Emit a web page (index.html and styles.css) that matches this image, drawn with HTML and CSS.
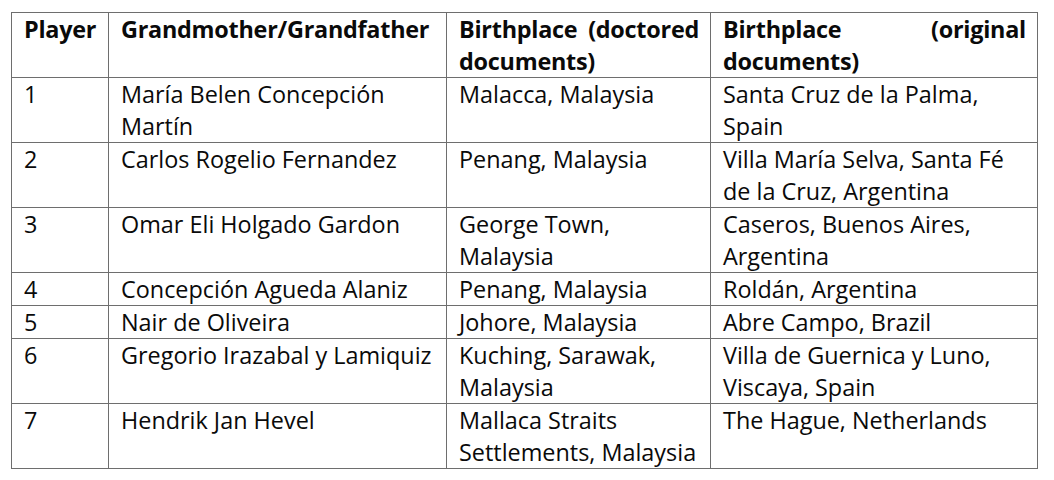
FILE: index.html
```html
<!DOCTYPE html>
<html>
<head>
<meta charset="utf-8">
<link rel="stylesheet" href="styles.css">
</head>
<body>
<table class="players">
  <colgroup>
    <col class="c1"><col class="c2"><col class="c3"><col class="c4">
  </colgroup>
  <thead>
    <tr>
      <th>Player</th>
      <th>Grandmother/Grandfather</th>
      <th>Birthplace (doctored documents)</th>
      <th>Birthplace (original documents)</th>
    </tr>
  </thead>
  <tbody>
    <tr><td>1</td><td>María Belen Concepción Martín</td><td>Malacca, Malaysia</td><td>Santa Cruz de la Palma, Spain</td></tr>
    <tr><td>2</td><td>Carlos Rogelio Fernandez</td><td>Penang, Malaysia</td><td>Villa María Selva, Santa Fé de la Cruz, Argentina</td></tr>
    <tr><td>3</td><td>Omar Eli Holgado Gardon</td><td>George Town, Malaysia</td><td>Caseros, Buenos Aires, Argentina</td></tr>
    <tr><td>4</td><td>Concepción Agueda Alaniz</td><td>Penang, Malaysia</td><td>Roldán, Argentina</td></tr>
    <tr><td>5</td><td>Nair de Oliveira</td><td>Johore, Malaysia</td><td>Abre Campo, Brazil</td></tr>
    <tr><td>6</td><td>Gregorio Irazabal y Lamiquiz</td><td>Kuching, Sarawak, Malaysia</td><td>Villa de Guernica y Luno, Viscaya, Spain</td></tr>
    <tr><td>7</td><td>Hendrik Jan Hevel</td><td>Mallaca Straits Settlements, Malaysia</td><td>The Hague, Netherlands</td></tr>
  </tbody>
</table>
</body>
</html>
```
FILE: styles.css
```css
html, body {
  margin: 0;
  padding: 0;
  background: #ffffff;
}
body {
  padding: 12px 0 0 11px;
  font-family: "Open Sans", "Noto Sans", sans-serif;
  font-size: 23.4px;
  line-height: 32px;
  color: #0a0a0a;
}
.players {
  border-collapse: collapse;
  table-layout: fixed;
  width: 1026px;
}
.c1 { width: 97px; }
.c2 { width: 338px; }
.c3 { width: 264px; }
.c4 { width: 327px; }
.players th,
.players td {
  border: 1px solid #6e6e6e;
  padding: 0 11px 0 12px;
  vertical-align: top;
  text-align: left;
}
.players th {
  font-weight: 700;
  text-align: justify;
  letter-spacing: -0.25px;
  padding-right: 11px;
}
```
